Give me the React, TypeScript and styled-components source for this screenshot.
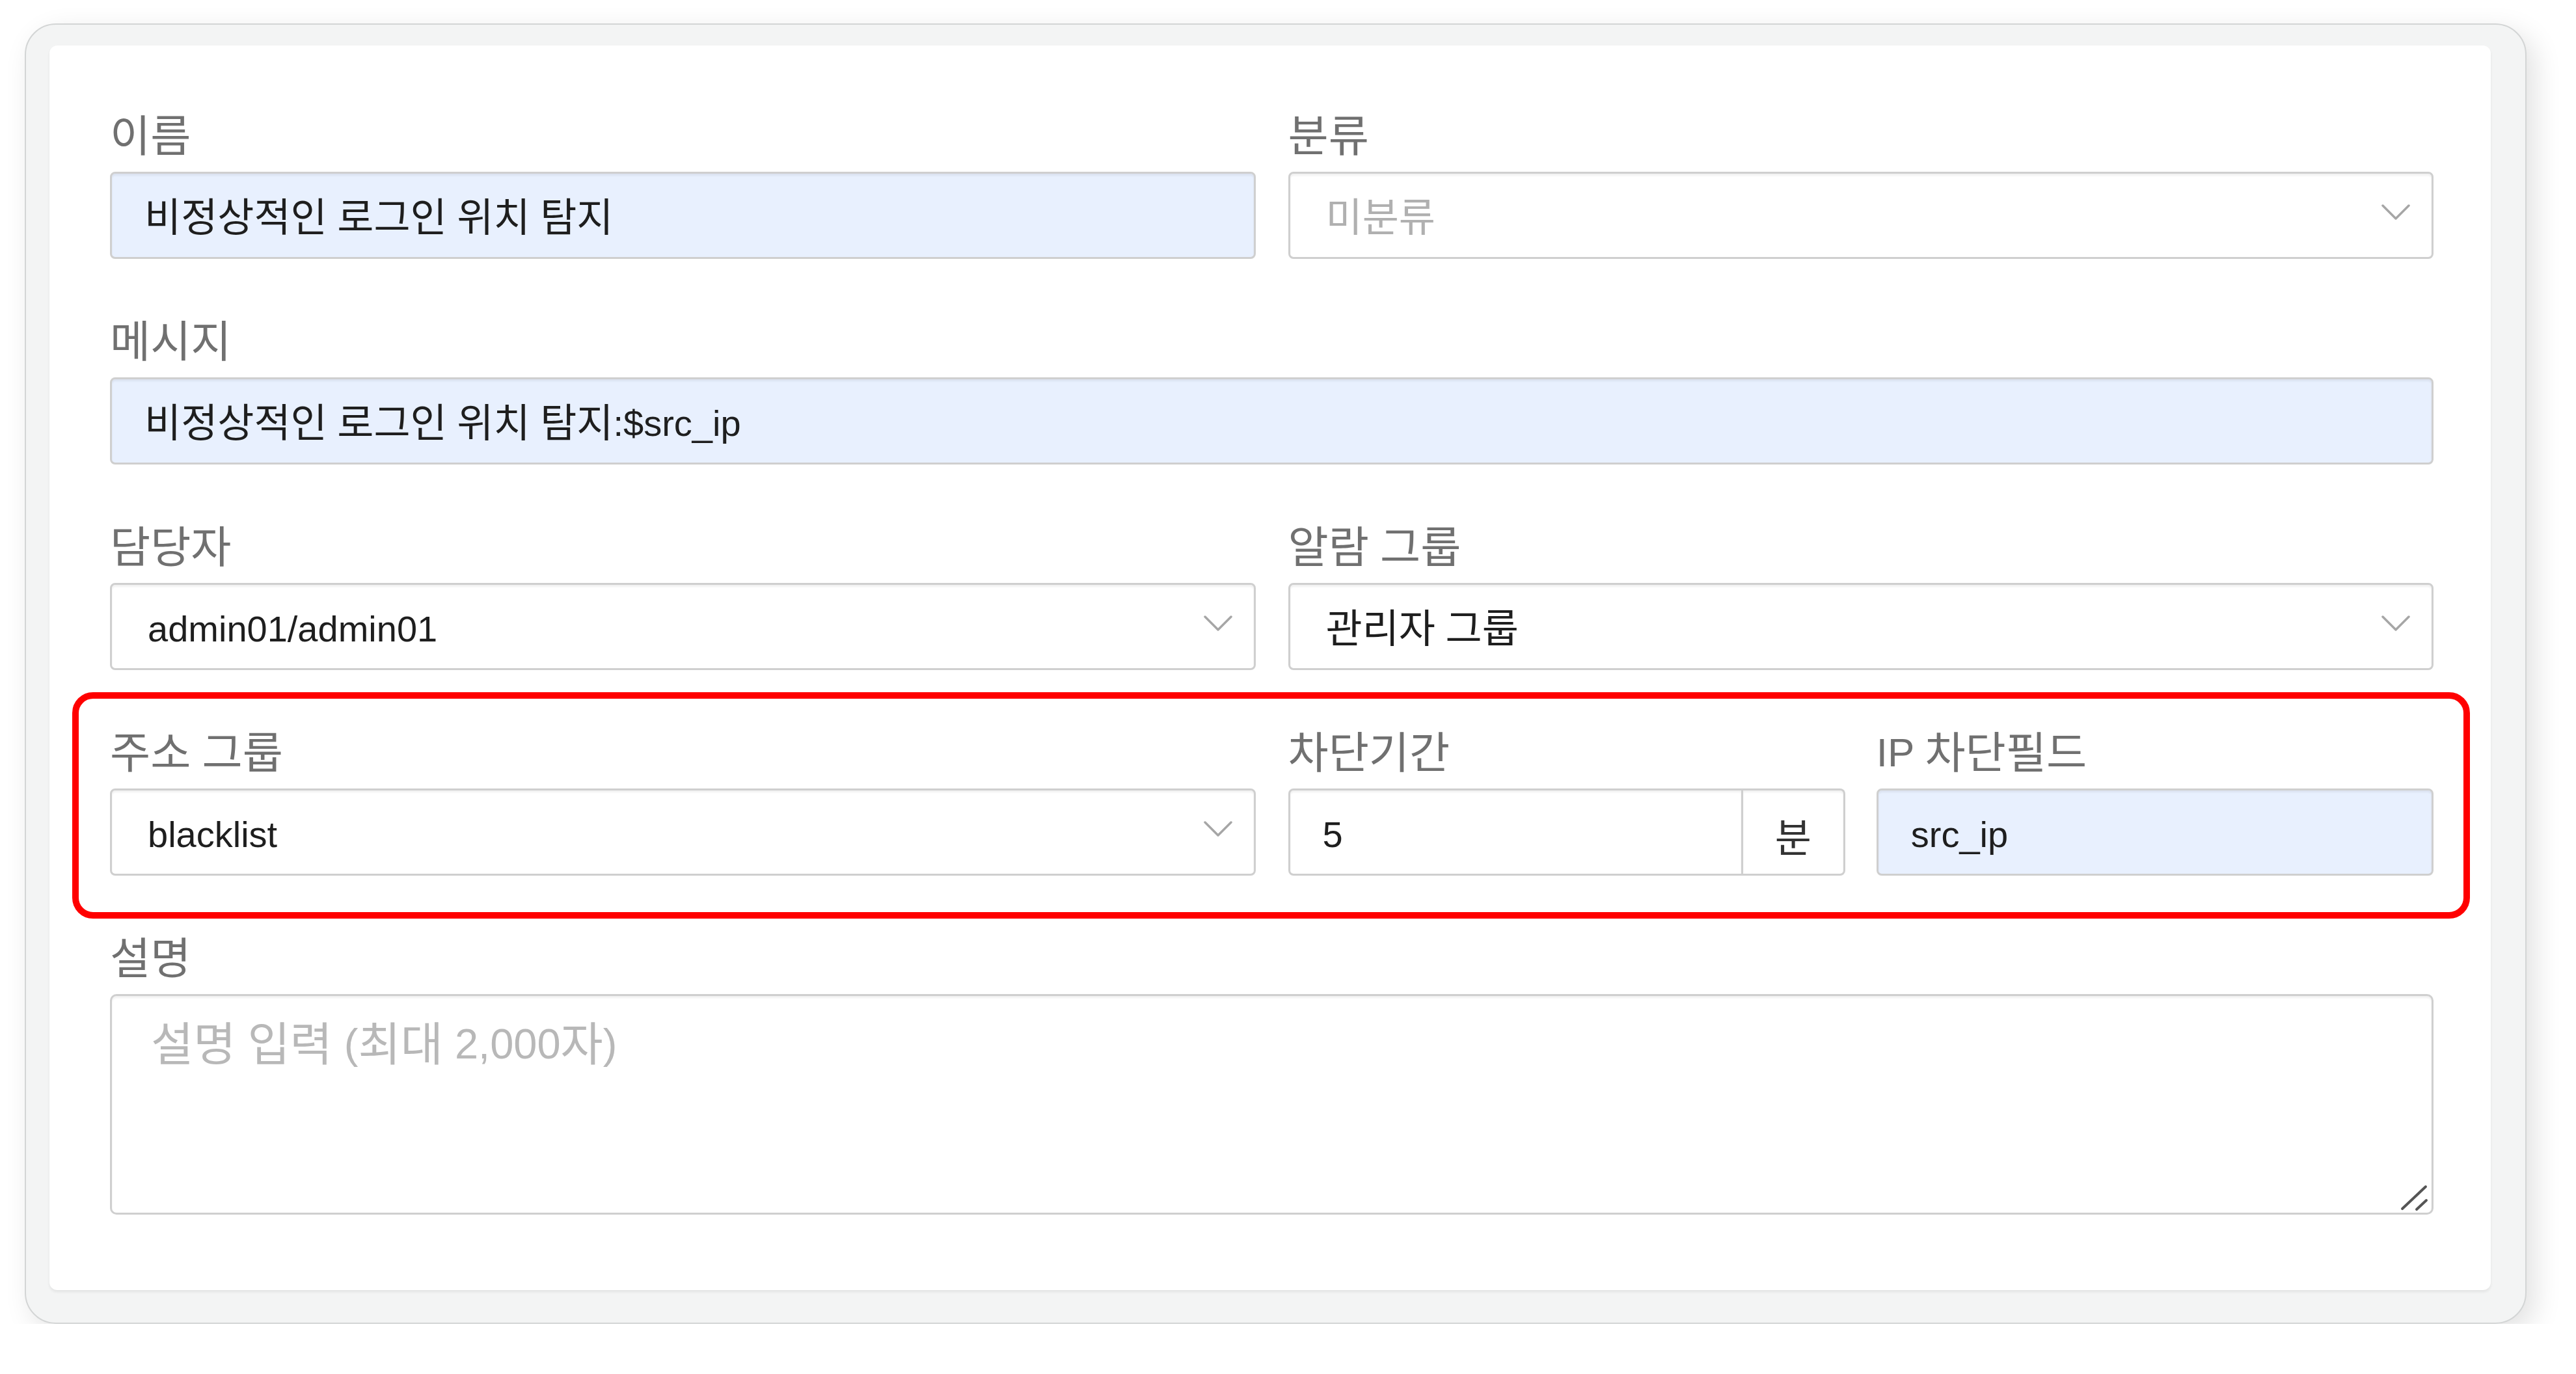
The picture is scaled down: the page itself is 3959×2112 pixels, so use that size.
import styled, { createGlobalStyle } from "styled-components";

const GlobalStyle = createGlobalStyle`
    html, body {
        margin: 0;
        padding: 0;
        background: #ffffff;
    }
    body {
        font-family: "Liberation Sans", "Noto Sans CJK KR", sans-serif;
    }
`;

const Page = styled.main`
    padding: 36px 0 0 38px;
`;

const Frame = styled.section`
    box-sizing: border-box;
    width: 3845px;
    padding: 32px 53px 50px 36px;
    background: #f3f4f4;
    border: 2px solid #d3d5d5;
    border-radius: 48px;
    box-shadow: 12px 14px 44px rgba(0, 0, 0, 0.12);
`;

const Card = styled.div`
    display: flex;
    flex-direction: column;
    gap: 79px;
    padding: 91px 88px 116px 93px;
    background: #ffffff;
    border-radius: 12px;
    box-shadow: 0 3px 4px rgba(0, 0, 0, 0.07);
`;

const Row = styled.div<{ $highlight?: boolean }>`
    position: relative;
    display: grid;
    grid-template-columns: 1fr 1fr;
    column-gap: 50px;

    ${({ $highlight }) =>
        $highlight &&
        `
        &::after {
            content: "";
            position: absolute;
            top: -45px;
            bottom: -66px;
            left: -58px;
            right: -56px;
            border: 10px solid #ff0000;
            border-radius: 32px;
            pointer-events: none;
        }
    `}
`;

const Split = styled.div`
    display: grid;
    grid-template-columns: 1fr 1fr;
    column-gap: 48px;
`;

const Field = styled.div<{ $wide?: boolean }>`
    display: flex;
    flex-direction: column;
    min-width: 0;
    grid-column: ${({ $wide }) => ($wide ? "1 / -1" : "auto")};
`;

const Label = styled.label`
    display: block;
    box-sizing: border-box;
    flex: none;
    height: 86px;
    padding-top: 10px;
    margin-bottom: 17px;
    font-size: 62px;
    line-height: 76px;
    color: #707070;
    white-space: nowrap;
`;

// hangul runs are drawn a little larger, as in the original font
const Ko = styled.span`
    font-size: 1.09em;
    vertical-align: -0.04em;
`;

const Control = styled.div<{ $filled?: boolean; $joined?: boolean; $select?: boolean; $muted?: boolean }>`
    box-sizing: border-box;
    display: flex;
    align-items: center;
    justify-content: space-between;
    flex: ${({ $joined }) => ($joined ? "1 1 0" : "0 0 auto")};
    min-width: 0;
    height: 134px;
    padding: ${({ $select }) => ($select ? "8px 33px 0 55px" : "8px 50px 0")};
    font-size: 56px;
    line-height: 70px;
    white-space: nowrap;
    color: ${({ $muted }) => ($muted ? "#b0b0b0" : "#1e1e1e")};
    background: ${({ $filled }) => ($filled ? "#e8f0fe" : "#ffffff")};
    border: 3px solid #cfcfcf;
    border-radius: ${({ $joined }) => ($joined ? "8px 0 0 8px" : "8px")};
    box-shadow: inset 0 3px 3px rgba(0, 0, 0, 0.06);

    svg {
        flex: none;
        margin-bottom: 18px;
    }
`;

const InputGroup = styled.div`
    display: flex;
`;

const Addon = styled.span`
    box-sizing: border-box;
    flex: none;
    display: flex;
    align-items: center;
    justify-content: center;
    width: 157px;
    height: 134px;
    padding-top: 8px;
    font-size: 56px;
    color: #333333;
    background: #ffffff;
    border: 3px solid #cfcfcf;
    border-left: none;
    border-radius: 0 8px 8px 0;
    box-shadow: inset 0 3px 3px rgba(0, 0, 0, 0.06);
`;

const TextArea = styled.div`
    position: relative;
    box-sizing: border-box;
    flex: none;
    height: 339px;
    padding: 29px 60px;
    font-size: 65px;
    line-height: 90px;
    color: #b8b8b8;
    background: #ffffff;
    border: 3px solid #cfcfcf;
    border-radius: 10px;
    box-shadow: inset 0 3px 3px rgba(0, 0, 0, 0.06);
`;

const Grip = styled.svg`
    position: absolute;
    right: 5px;
    bottom: 2px;
`;

const ko = (text: string) =>
    text.split(/([가-힣]+)/).map((part, i) => (/[가-힣]/.test(part) ? <Ko key={i}>{part}</Ko> : part));

const Chevron = () => (
    <svg width="44" height="25" viewBox="0 0 44 25" fill="none">
        <path d="M2 2 L22 22 L42 2" stroke="#a6a6a6" strokeWidth="3.5" strokeLinecap="round" strokeLinejoin="round" />
    </svg>
);

const Input = ({ value, filled, joined }: { value: string; filled?: boolean; joined?: boolean }) => (
    <Control role="textbox" $filled={filled} $joined={joined}>
        <span>{ko(value)}</span>
    </Control>
);

const Select = ({ value, placeholder }: { value: string; placeholder?: boolean }) => (
    <Control role="combobox" $select $muted={placeholder}>
        <span>{ko(value)}</span>
        <Chevron />
    </Control>
);

const App = () => {
    return (
        <>
            <GlobalStyle />
            <Page>
                <Frame>
                    <Card>
                        <Row>
                            <Field>
                                <Label>{ko("이름")}</Label>
                                <Input filled value="비정상적인 로그인 위치 탐지" />
                            </Field>
                            <Field>
                                <Label>{ko("분류")}</Label>
                                <Select value="미분류" placeholder />
                            </Field>
                        </Row>
                        <Row>
                            <Field $wide>
                                <Label>{ko("메시지")}</Label>
                                <Input filled value="비정상적인 로그인 위치 탐지:$src_ip" />
                            </Field>
                        </Row>
                        <Row>
                            <Field>
                                <Label>{ko("담당자")}</Label>
                                <Select value="admin01/admin01" />
                            </Field>
                            <Field>
                                <Label>{ko("알람 그룹")}</Label>
                                <Select value="관리자 그룹" />
                            </Field>
                        </Row>
                        <Row $highlight>
                            <Field>
                                <Label>{ko("주소 그룹")}</Label>
                                <Select value="blacklist" />
                            </Field>
                            <Split>
                                <Field>
                                    <Label>{ko("차단기간")}</Label>
                                    <InputGroup>
                                        <Input joined value="5" />
                                        <Addon>{ko("분")}</Addon>
                                    </InputGroup>
                                </Field>
                                <Field>
                                    <Label>{ko("IP 차단필드")}</Label>
                                    <Input filled value="src_ip" />
                                </Field>
                            </Split>
                        </Row>
                        <Row>
                            <Field $wide>
                                <Label>{ko("설명")}</Label>
                                <TextArea role="textbox" aria-multiline="true">
                                    {ko("설명 입력 (최대 2,000자)")}
                                    <Grip width="45" height="42" viewBox="0 0 45 42" fill="none">
                                        <path d="M5 38 L41 4 M27 39 L42 25" stroke="#555555" strokeWidth="4" strokeLinecap="round" />
                                    </Grip>
                                </TextArea>
                            </Field>
                        </Row>
                    </Card>
                </Frame>
            </Page>
        </>
    );
};

export default App;
